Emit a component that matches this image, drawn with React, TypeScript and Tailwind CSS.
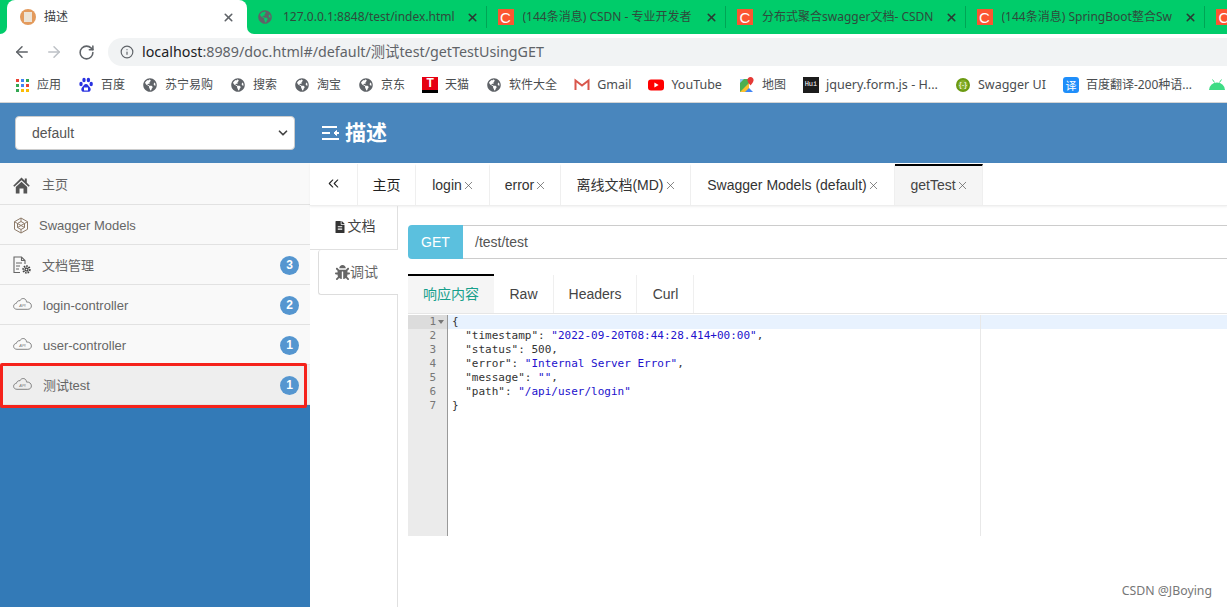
import type { ReactNode } from 'react';
import { ArrowLeft, ArrowRight, ChevronDown, ChevronsLeft, Info, RotateCw, X } from 'lucide-react';
import { FaBug, FaFileAlt, FaGlobeAmericas } from 'react-icons/fa';

const sans = 'font-["Liberation_Sans","Noto_Sans_CJK_SC",sans-serif]';
const chrome = 'font-["Noto_Sans","Noto_Sans_CJK_SC",sans-serif]';

function Globe({ size = 14 }: { size?: number }) {
  return <FaGlobeAmericas size={size} className="shrink-0 text-[#5f6368]" />;
}

function CsdnIcon() {
  return (
    <span className='flex h-4 w-4 shrink-0 items-center justify-center bg-[#fc5531] font-["Liberation_Sans",sans-serif] text-[15px] leading-none text-white'>
      C
    </span>
  );
}

function Tab({ icon, label }: { icon: ReactNode; label: string }) {
  return (
    <div className="flex h-[22px] w-[239.5px] shrink-0 items-center border-r border-[#00a555] pr-[7px] pl-[11px]">
      <span className="flex w-[25px] shrink-0 items-center">{icon}</span>
      <span className={`min-w-0 flex-1 overflow-hidden text-[12px] whitespace-nowrap text-[#2f4a3c] ${chrome}`}>{label}</span>
      <X size={13} strokeWidth={3} className="ml-2 shrink-0 text-[#2b3a33]" />
    </div>
  );
}

function AppsIcon() {
  const colors = ['#ea4335', '#4285f4', '#34a853', '#34a853', '#4285f4', '#ea4335', '#34a853', '#fbbc05', '#fbbc05'];
  return (
    <span className="grid h-[13px] w-[13px] grid-cols-3 gap-[2px]">
      {colors.map((c, i) => (
        <span key={i} className="h-[3px] w-[3px]" style={{ backgroundColor: c }} />
      ))}
    </span>
  );
}

function BaiduIcon() {
  return (
    <svg width="16" height="16" viewBox="0 0 16 16" fill="#2932e1">
      <ellipse cx="3" cy="7" rx="1.7" ry="2.2" />
      <ellipse cx="6" cy="3" rx="1.7" ry="2.3" />
      <ellipse cx="10.4" cy="3" rx="1.7" ry="2.3" />
      <ellipse cx="13.2" cy="7" rx="1.7" ry="2.2" />
      <path d="M8 7c-2 0-2.4 2-4 3.4C2.6 12 3.4 15 6 14.8c1-.1 3-.1 4 0 2.6.2 3.4-2.8 2-4.4C10.4 9 10 7 8 7z" />
      <rect x="6" y="10.5" width="4" height="3" fill="#fff" />
    </svg>
  );
}

function TmallIcon() {
  return (
    <span className='flex h-4 w-4 flex-col items-center justify-start overflow-hidden bg-[#e60012] font-["Liberation_Sans",sans-serif] text-[12px] leading-[13px] font-bold text-white shadow-[inset_0_-3px_0_#000]'>
      T
    </span>
  );
}

function GmailIcon() {
  return (
    <svg width="16" height="16" viewBox="0 0 16 16" fill="none">
      <path d="M1.5 13V3.5L8 8.5l6.5-5V13" stroke="#d9574c" strokeWidth="2" />
    </svg>
  );
}

function YoutubeIcon() {
  return (
    <svg width="16" height="16" viewBox="0 0 16 16">
      <rect y="2.5" width="16" height="11" rx="3" fill="#f00" />
      <path d="M6.4 5.5v5L10.6 8z" fill="#fff" />
    </svg>
  );
}

function MapsIcon() {
  return (
    <svg width="16" height="16" viewBox="0 0 16 16">
      <path d="M1 2h9v13H1z" fill="#4caf50" />
      <path d="M1 15 10 6v9z" fill="#fbc02d" />
      <path d="M6 15l4-4 4 4z" fill="#4285f4" />
      <path d="M1 2h4L1 6z" fill="#90caf9" />
      <path d="M11.5 0C9.6 0 8.4 1.4 8.4 3.1c0 2.2 3.1 5.4 3.1 5.4s3.1-3.2 3.1-5.4C14.6 1.4 13.4 0 11.5 0z" fill="#e53935" />
    </svg>
  );
}

function HuiIcon() {
  return (
    <span className='flex h-4 w-4 items-center justify-center bg-[#1c1c1c] font-["Liberation_Mono",monospace] text-[7px] leading-none text-white'>
      Hui
    </span>
  );
}

function SwaggerIcon() {
  return (
    <span className='flex h-[14px] w-[14px] items-center justify-center rounded-full border-2 border-[#6b9a11] bg-[#85ad2a] font-["Liberation_Sans",sans-serif] text-[8px] leading-none text-white'>
      {'{-}'}
    </span>
  );
}

function TranslateIcon() {
  return (
    <span className="flex h-4 w-4 items-center justify-center rounded-[3px] bg-[#1f8efa] text-[11px] leading-none text-white">
      译
    </span>
  );
}

function AndroidIcon() {
  return (
    <svg width="16" height="16" viewBox="0 0 16 16" fill="#3ddc84">
      <path d="M0 13a8 7.5 0 0 1 16 0z" />
      <path d="M3.5 2.5l2 3M12.5 2.5l-2 3" stroke="#3ddc84" strokeWidth="1" />
    </svg>
  );
}

function Bookmark({ icon, label, size = 'text-[12px]' }: { icon: ReactNode; label?: string; size?: string }) {
  return (
    <div className="flex shrink-0 items-center gap-[7px]">
      <span className="flex h-4 w-4 items-center justify-center">{icon}</span>
      {label && <span className={`whitespace-nowrap text-[#4a4d50] ${size}`}>{label}</span>}
    </div>
  );
}

function HomeIcon() {
  return (
    <svg width="17" height="17" viewBox="0 0 17 17" fill="#555" className="shrink-0">
      <path d="M8.5 0.5 0.2 8.7 1.4 9.7 8.5 3.3 15.6 9.7 16.8 8.7 13.8 5.8V1.5H11.8V3.8z" />
      <path d="M2.8 10 8.5 4.8 14.2 10V16.5H10.5V11.5H6.5V16.5H2.8z" />
    </svg>
  );
}

function ApiCloud() {
  return (
    <svg width="19" height="12" viewBox="0 0 19 12" fill="none" className="mb-[3px] shrink-0">
      <path
        d="M4 11.3C2 11.3.6 10 .6 8.3c0-1.6 1.2-2.8 2.8-3C3.8 3.5 5.3 2.4 7 2.7 8-.1 12.3-.3 13.3 2.8c.1.4.2.8.1 1.2 2.7-.3 5 1.4 5 3.9 0 2-1.5 3.4-3.6 3.4z"
        stroke="#777"
        strokeWidth="0.9"
      />
      <text x="9.5" y="9" fontSize="4" textAnchor="middle" fill="#777" fontStyle="italic" fontFamily="Liberation Sans">
        API
      </text>
    </svg>
  );
}

function ModelsIcon() {
  return (
    <svg width="16" height="17" viewBox="0 0 16 17" fill="none" stroke="#8d7a68" strokeWidth="1" className="shrink-0">
      <path d="M8 1l6.5 3.7v7.6L8 16l-6.5-3.7V4.7z" />
      <path d="M8 4.5l3.5 2v4L8 12.5l-3.5-2v-4zM8 1v3.5M14.5 4.7l-3 1.8M1.5 4.7l3 1.8M8 12.5V16M4.5 6.5l7 4M11.5 6.5l-7 4" />
    </svg>
  );
}

function DocsIcon() {
  return (
    <svg width="19" height="19" viewBox="0 0 19 19" fill="none" stroke="#666" strokeWidth="1.1" className="shrink-0">
      <path d="M7 16.5H1V1h7.5L12 4.5V8" />
      <path d="M8.5 1v3.5H12M3 7h6M3 10h4M3 13h3" />
      <circle cx="13.5" cy="13.5" r="3.2" strokeWidth="2" strokeDasharray="1.5 0.9" stroke="#444" />
      <circle cx="13.5" cy="13.5" r="1.4" stroke="#444" />
    </svg>
  );
}

function SideItem({ icon, label, badge, gap, active, flush }: { icon: ReactNode; label: string; badge?: number; gap: string; active?: boolean; flush?: boolean }) {
  return (
    <div className={`flex h-10 items-center border-b border-[#e2e2e2] pt-px pr-[11px] pl-[13px] ${active ? 'bg-[#eeeeee]' : ''}`}>
      <span className={`flex items-center ${gap}`}>{icon}</span>
      <span className={`flex-1 text-[13px] text-[#666] ${flush ? '' : 'pt-[2px]'}`}>{label}</span>
      {badge !== undefined && (
        <span className="flex h-[19px] w-[19px] items-center justify-center rounded-full bg-[#5596d0] text-[12px] font-bold text-white">
          {badge}
        </span>
      )}
    </div>
  );
}

function PageTab({ label, width, first, active }: { label: string; width: string; first?: boolean; active?: boolean }) {
  return (
    <div
      className={`flex h-[41px] shrink-0 items-center justify-center self-end border-r border-[#efefef] text-[14px] ${first ? '' : 'pl-[2px]'} ${width} ${
        active ? 'border-t-2 border-t-black bg-[#f5f5f5] text-[#444]' : 'border-t-2 border-t-transparent text-[#333]'
      }`}
    >
      <span className={first ? 'text-[#222]' : ''}>{label}</span>
      {!first && <X size={13} strokeWidth={1.3} className="text-[#555]" />}
    </div>
  );
}

const navItems = [
  { label: '应用', icon: <AppsIcon /> },
  { label: '百度', icon: <BaiduIcon /> },
  { label: '苏宁易购', icon: <Globe /> },
  { label: '搜索', icon: <Globe /> },
  { label: '淘宝', icon: <Globe /> },
  { label: '京东', icon: <Globe /> },
  { label: '天猫', icon: <TmallIcon /> },
  { label: '软件大全', icon: <Globe /> },
  { label: 'Gmail', icon: <GmailIcon />, size: 'text-[12.5px]' },
  { label: 'YouTube', icon: <YoutubeIcon />, size: 'text-[12.5px]' },
  { label: '地图', icon: <MapsIcon /> },
  { label: 'jquery.form.js - H...', icon: <HuiIcon />, size: 'text-[12.6px]' },
  { label: 'Swagger UI', icon: <SwaggerIcon />, size: 'text-[12.5px]' },
  { label: '百度翻译-200种语...', icon: <TranslateIcon /> },
];

const S = ({ children }: { children: ReactNode }) => <span className="text-[#2211cc]">{children}</span>;

const codeLines: ReactNode[] = [
  '{',
  <>  "timestamp": <S>"2022-09-20T08:44:28.414+00:00"</S>,</>,
  '  "status": 500,',
  <>  "error": <S>"Internal Server Error"</S>,</>,
  <>  "message": <S>""</S>,</>,
  <>  "path": <S>"/api/user/login"</S></>,
  '}',
];

export default function App() {
  return (
    <div className={`flex h-[607px] w-[1227px] flex-col overflow-hidden bg-white ${sans}`}>
      {/* browser tabs */}
      <div className="flex h-[34px] shrink-0 items-center overflow-hidden bg-[#00cc6a] pl-[7px]">
        <div className="relative flex h-[34px] w-[240px] shrink-0 items-center rounded-t-[8px] bg-white pr-[12px] pl-[13px]">
          <span className="absolute bottom-0 -left-[7px] h-[7px] w-[7px] bg-white">
            <span className="block h-full w-full rounded-br-[7px] bg-[#00cc6a]" />
          </span>
          <span className="absolute -right-[7px] bottom-0 h-[7px] w-[7px] bg-white">
            <span className="block h-full w-full rounded-bl-[7px] bg-[#00cc6a]" />
          </span>
          <span className="flex h-4 w-4 items-center justify-center rounded-full bg-[#e39a5c]">
            <span className="h-[10px] w-[8px] bg-[#ece3d6]" />
          </span>
          <span className={`ml-2 flex-1 text-[12px] text-[#3c4043] ${chrome}`}>描述</span>
          <X size={13} strokeWidth={3} className="text-[#5f6368]" />
        </div>
        <Tab icon={<Globe />} label="127.0.0.1:8848/test/index.html" />
        <Tab icon={<CsdnIcon />} label="(144条消息) CSDN - 专业开发者" />
        <Tab icon={<CsdnIcon />} label="分布式聚合swagger文档- CSDN" />
        <Tab icon={<CsdnIcon />} label="(144条消息) SpringBoot整合Sw" />
        <Tab icon={<CsdnIcon />} label="" />
      </div>

      {/* address bar */}
      <div className="flex h-[34px] shrink-0 items-center bg-white pt-[2px] pl-[13px]">
        <ArrowLeft size={18} strokeWidth={2} className="text-[#5f6368]" />
        <ArrowRight size={18} strokeWidth={2} className="ml-[14px] text-[#bdc1c6]" />
        <RotateCw size={17} strokeWidth={2.2} className="ml-[15px] text-[#5f6368]" />
        <div className="ml-[13px] flex h-7 flex-1 items-center rounded-l-full bg-[#f1f3f4] pl-[12px]">
          <Info size={14} strokeWidth={2} className="text-[#5f6368]" />
          <span className={`ml-[8px] text-[14.3px] text-[#5f6368] ${chrome}`}>
            <span className="text-[#202124]">localhost</span>:8989/doc.html#/default/测试test/getTestUsingGET
          </span>
        </div>
      </div>

      {/* bookmarks */}
      <div className={`flex h-[32px] shrink-0 items-center gap-[17px] overflow-hidden pt-[2px] pl-[14px] ${chrome}`}>
        {navItems.map((b) => (
          <Bookmark key={b.label} icon={b.icon} label={b.label} size={b.size} />
        ))}
        <Bookmark icon={<AndroidIcon />} />
      </div>

      <div className="mt-[2px] h-px shrink-0 bg-[#d4d4d4]" />

      {/* app header */}
      <div className="flex h-[60px] shrink-0 items-center bg-[#4986bd]">
        <div className="flex w-[310px] shrink-0 pl-[15px]">
          <div className="flex h-[34px] w-[280px] items-center justify-between rounded-[4px] border border-[#ccc] bg-white pr-[4px] pl-4">
            <span className="text-[14px] text-[#555]">default</span>
            <ChevronDown size={14} strokeWidth={3} className="text-[#444]" />
          </div>
        </div>
        <div className="ml-[12px] flex items-center gap-[5px] text-white">
          <svg width="18" height="16" viewBox="0 0 18 16" fill="none" stroke="#fff" strokeWidth="2">
            <path d="M0 2h15M0 8h8M0 14h17" />
            <path d="M17 8h-4" />
            <path d="M14.5 5.5 12 8l2.5 2.5z" fill="#fff" strokeWidth="1" />
          </svg>
          <span className="text-[21px] font-bold">描述</span>
        </div>
      </div>

      <div className="relative flex min-h-0 flex-1">
        {/* sidebar */}
        <div className="flex w-[310px] shrink-0 flex-col bg-[#337ab7]">
          <div className="bg-[#f9f9f9] pt-[2px]">
            <SideItem icon={<HomeIcon />} label="主页" gap="w-[29px]" flush />
            <SideItem icon={<ModelsIcon />} label="Swagger Models" gap="w-[26px]" />
            <SideItem icon={<DocsIcon />} label="文档管理" badge={3} gap="w-[29px]" />
            <SideItem icon={<ApiCloud />} label="login-controller" badge={2} gap="w-[30px]" />
            <SideItem icon={<ApiCloud />} label="user-controller" badge={1} gap="w-[30px]" />
            <SideItem icon={<ApiCloud />} label="测试test" badge={1} gap="w-[30px]" active />
          </div>
        </div>
        <div className="pointer-events-none absolute top-[200px] left-0 h-[45px] w-[307px] rounded-[2px] border-[3px] border-[#f5221b]" />

        {/* main */}
        <div className="flex min-w-0 flex-1 flex-col">
          <div className="flex h-[43px] shrink-0 items-center border-b border-[#eee] shadow-[0_1px_2px_rgba(0,0,0,0.06)]">
            <div className="flex h-[41px] w-[48px] shrink-0 items-center justify-center self-end border-r border-[#efefef] pb-[3px] text-[#222]">
              <ChevronsLeft size={17} strokeWidth={1.5} />
            </div>
            <PageTab label="主页" width="w-[58px]" first />
            <PageTab label="login" width="w-[74px]" />
            <PageTab label="error" width="w-[71px]" />
            <PageTab label="离线文档(MD)" width="w-[130px]" />
            <PageTab label="Swagger Models (default)" width="w-[204px]" />
            <PageTab label="getTest" width="w-[88px]" active />
          </div>

          <div className="flex min-h-0 flex-1">
            {/* doc/debug side tabs */}
            <div className="flex w-[88px] shrink-0 flex-col">
              <div className="flex h-[44px] items-center justify-center gap-[2px] border-r border-b border-[#e0e0e0] pb-[2px] pl-[2px] text-[14px] text-[#444]">
                <FaFileAlt size={12} className="text-[#333]" />
                文档
              </div>
              <div className="ml-2 flex h-[45px] items-center justify-center rounded-l-[3px] border-b border-l border-[#ddd] pr-1 text-[14px] text-[#666]">
                <FaBug size={15} className="text-[#666]" />
                调试
              </div>
              <div className="flex-1 border-r border-[#e0e0e0]" />
            </div>

            {/* debug panel */}
            <div className="flex min-w-0 flex-1 flex-col pt-[19px] pl-[10px]">
              <div className="flex h-[34px] shrink-0">
                <div className="flex w-[55px] items-center justify-center rounded-l-[4px] bg-[#5bc0de] text-[14px] text-white">GET</div>
                <div className="flex flex-1 items-center border-y border-[#ccc] pl-3 text-[14px] text-[#555]">/test/test</div>
              </div>

              <div className="mt-[15px] flex h-10 shrink-0 border-b border-[#e6e6e6] pt-px text-[14px] text-[#444]">
                <div className="-mt-px flex w-[86px] items-center justify-center border-t-2 border-black bg-[#f5f5f5] text-[#17a08c]">响应内容</div>
                <div className="flex w-[60px] items-center justify-center border-r border-[#efefef]">Raw</div>
                <div className="flex w-[83px] items-center justify-center border-r border-[#efefef]">Headers</div>
                <div className="flex w-[57px] items-center justify-center border-r border-[#efefef] pl-px">Curl</div>
              </div>

              <div className='relative mt-px flex h-[221px] shrink-0 font-["DejaVu_Sans_Mono",monospace] text-[11px] leading-[14px] text-[#333]'>
                <div className="w-[40px] shrink-0 border-r border-[#999] bg-[#ebebeb] text-[#777]">
                  {codeLines.map((_, i) => (
                    <div key={i} className={`relative h-[14px] pr-[11px] text-right ${i === 0 ? 'bg-[#dcdcdc]' : ''}`}>
                      {i + 1}
                      {i === 0 && <span className="absolute top-[5px] right-[3px] h-0 w-0 border-x-[3px] border-t-[4px] border-x-transparent border-t-[#777]" />}
                    </div>
                  ))}
                </div>
                <div className="min-w-0 flex-1 whitespace-pre pl-[4px]">
                  {codeLines.map((line, i) => (
                    <div key={i} className={`-ml-[4px] h-[14px] pl-[4px] ${i === 0 ? 'bg-[#e8f2fe]' : ''}`}>
                      {line}
                    </div>
                  ))}
                </div>
                <div className="absolute top-0 bottom-0 left-[572px] w-px bg-[#e8e8e8]" />
              </div>
            </div>
          </div>
        </div>

        <span className='absolute right-[15px] bottom-[7px] font-["Noto_Sans",sans-serif] text-[12.3px] text-[#777]'>CSDN @JBoying</span>
      </div>
    </div>
  );
}
